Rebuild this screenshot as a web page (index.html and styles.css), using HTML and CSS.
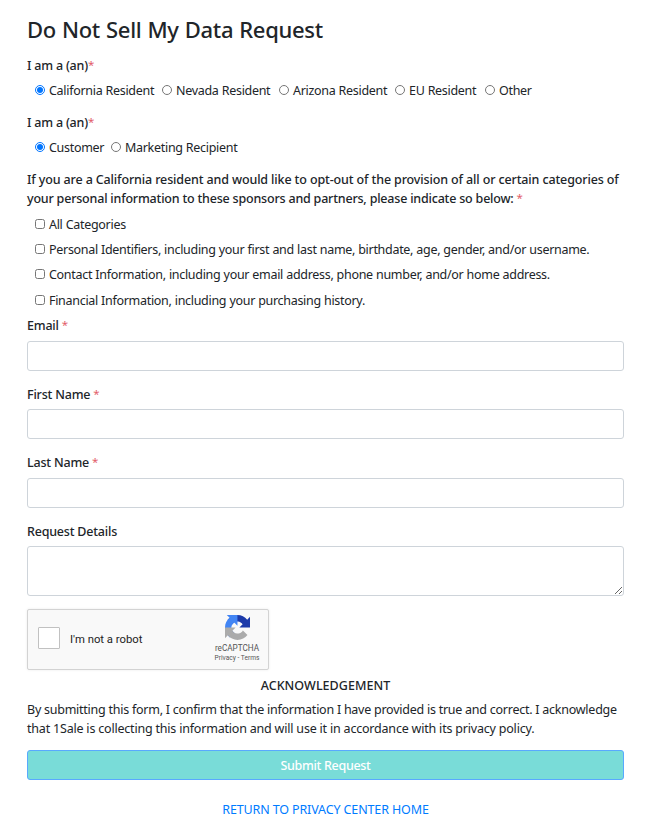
FILE: index.html
```html
<!DOCTYPE html>
<html lang="en">
<head>
<meta charset="utf-8">
<title>Do Not Sell My Data Request</title>
<link rel="stylesheet" href="styles.css">
</head>
<body>
<form class="request">
  <h1 class="title">Do Not Sell My Data Request</h1>

  <p class="label">I am a (an)<span class="star">*</span></p>
  <div class="options options-residency">
    <label class="option"><input type="radio" name="residency" checked><span>California Resident</span></label>
    <label class="option"><input type="radio" name="residency"><span>Nevada Resident</span></label>
    <label class="option"><input type="radio" name="residency"><span>Arizona Resident</span></label>
    <label class="option"><input type="radio" name="residency"><span>EU Resident</span></label>
    <label class="option"><input type="radio" name="residency"><span>Other</span></label>
  </div>

  <p class="label">I am a (an)<span class="star">*</span></p>
  <div class="options options-role">
    <label class="option"><input type="radio" name="role" checked><span>Customer</span></label>
    <label class="option"><input type="radio" name="role"><span>Marketing Recipient</span></label>
  </div>

  <p class="label question"><span class="question-lead">If you are a California resident and would like to opt-out of the provision of all or certain categories of</span><br>your personal information to these sponsors and partners, please indicate so below: <span class="star">*</span></p>
  <div class="categories">
    <label class="option"><input type="checkbox"><span>All Categories</span></label>
    <label class="option"><input type="checkbox"><span>Personal Identifiers, including your first and last name, birthdate, age, gender, and/or username.</span></label>
    <label class="option"><input type="checkbox"><span>Contact Information, including your email address, phone number, and/or home address.</span></label>
    <label class="option"><input type="checkbox"><span>Financial Information, including your purchasing history.</span></label>
  </div>

  <div class="field"><label class="label" for="email">Email <span class="star">*</span></label><input class="control" id="email" type="text"></div>
  <div class="field"><label class="label" for="first">First Name <span class="star">*</span></label><input class="control" id="first" type="text"></div>
  <div class="field"><label class="label" for="last">Last Name <span class="star">*</span></label><input class="control" id="last" type="text"></div>
  <div class="field field-details"><label class="label" for="details">Request Details</label><textarea class="control details" id="details"></textarea></div>

  <div class="captcha">
    <span class="captcha-box"></span>
    <span class="captcha-text">I'm not a robot</span>
    <div class="captcha-brand">
      <svg class="captcha-logo" viewBox="0 0 64 64" aria-hidden="true">
        <path fill="#1c3aa9" d="M64 31.955l-.013-1.370V4.687l-7.160 7.160C50.967 4.674 42.033.093 32.030.093c-10.408 0-19.656 4.950-25.518 12.622l11.736 11.860a15.550 15.550 0 0 1 4.754-5.334c2.050-1.600 4.952-2.906 9.020-2.906.492 0 .870.057 1.148.165 5.040.397 9.400 3.180 11.980 7.210l-8.307 8.307z"/>
        <path fill="#4285f4" d="M31.862.094l-1.370.013H4.594l7.160 7.160C4.580 13.147 0 22.080 0 32.082c0 10.408 4.950 19.656 12.622 25.518l11.860-11.736a15.550 15.550 0 0 1-5.334-4.754c-1.600-2.050-2.906-4.952-2.906-9.020 0-.492.057-.870.165-1.148.397-5.040 3.180-9.400 7.210-11.980l8.307 8.307z"/>
        <path fill="#ababab" d="M.001 32.045l.013 1.370v25.898l7.160-7.160c5.873 7.173 14.806 11.754 24.808 11.754 10.408 0 19.656-4.950 25.518-12.622l-11.736-11.860a15.550 15.550 0 0 1-4.754 5.334c-2.050 1.600-4.952 2.906-9.020 2.906-.492 0-.870-.057-1.148-.165-5.040-.397-9.400-3.180-11.980-7.210l8.307-8.307z"/>
      </svg>
      <span class="captcha-name">reCAPTCHA</span>
      <span class="captcha-legal">Privacy - Terms</span>
    </div>
  </div>

  <h2 class="ack-title">ACKNOWLEDGEMENT</h2>
  <p class="ack"><span class="ack-lead">By submitting this form, I confirm that the information I have provided is true and correct. I acknowledge</span><br>that 1Sale is collecting this information and will use it in accordance with its privacy policy.</p>
  <button class="submit" type="button">Submit Request</button>
  <a class="home">RETURN TO PRIVACY CENTER HOME</a>
</form>
</body>
</html>
```
FILE: styles.css
```css
* { box-sizing: border-box; }
body {
  margin: 0;
  background: #fff;
  color: #212529;
  font: 12.5px/19px "Noto Sans", "Open Sans", sans-serif;
  letter-spacing: -0.2px;
  white-space: nowrap;
}
p, h1, h2 { margin: 0; }
.request { width: 597px; margin-left: 27px; padding-top: 14px; }
.title { font-size: 22px; line-height: 30px; font-weight: 500; letter-spacing: -0.32px; word-spacing: 0.7px; margin-bottom: 12px; }
.label { display: block; font-weight: 500; line-height: 19px; }
.star { color: #dc3545; font-weight: 400; opacity: .8; font-size: 11.5px; line-height: 1; vertical-align: 1px; }
.options { display: grid; height: 19px; margin: 6px 0 13px; padding-left: 8px; }
.options-residency { grid-template-columns: 127px 117px 116px 90px 50px; }
.options-role { grid-template-columns: 76px 150px; }
.option { display: flex; align-items: center; gap: 4px; letter-spacing: -0.3px; word-spacing: 0.2px; }
.option input { width: 10px; height: 10px; margin: -1px 0 0; flex: none; accent-color: #0075ff; }
.question { margin-bottom: 7px; }
.question-lead { letter-spacing: -0.13px; }
.categories { display: grid; grid-auto-rows: 25.2px; padding: 0 0 0.2px 8px; align-items: start; }
.categories .option { height: 19px; }
.field { height: 68.4px; padding-top: 0.4px; }
.control {
  display: block; width: 100%; height: 30px; margin-top: 5.6px;
  border: 1px solid #ced4da; border-radius: 3px; background: #fff;
}
.details { height: 50px; resize: vertical; }
.field-details { height: 87.8px; }
.captcha {
  display: flex; align-items: center; width: 242px; height: 61px; padding-left: 10px;
  border: 1px solid #d3d3d3; border-radius: 2px; background: #f9f9f9;
  box-shadow: 0 0 3px rgba(0,0,0,.08); font-family: Roboto, sans-serif;
}
.captcha-box { flex: none; width: 22px; height: 22px; border: 1px solid #c1c1c1; border-radius: 1px; background: #fff; margin-top: -3px; }
.captcha-text { flex: 1; margin-left: 10px; font-size: 11.3px; letter-spacing: 0; color: #222; }
.captcha-brand { flex: none; width: 46px; margin-right: 8px; display: flex; flex-direction: column; align-items: center; color: #555; letter-spacing: 0; }
.captcha-logo { width: 25px; height: 25px; margin: -1px 0 2px; }
.captcha-name { font-size: 8.2px; line-height: 12px; }
.captcha-legal { font-size: 6.6px; line-height: 8px; }
.ack-title { font-size: 12.5px; line-height: 19px; font-weight: 500; text-align: center; letter-spacing: 0.05px; margin-top: 6px; }
.ack { margin-top: 5px; }
.ack-lead { letter-spacing: -0.25px; }
.submit {
  display: block; width: 100%; height: 30px; margin-top: 12px; padding: 1px 0 0;
  border: 1px solid #59a9ff; border-radius: 3px; background: #79dcd8; color: #fff;
  font: inherit; font-weight: 500; letter-spacing: -0.3px;
}
.home { display: block; margin-top: 20px; text-align: center; color: #007bff; letter-spacing: -0.13px; }
```
